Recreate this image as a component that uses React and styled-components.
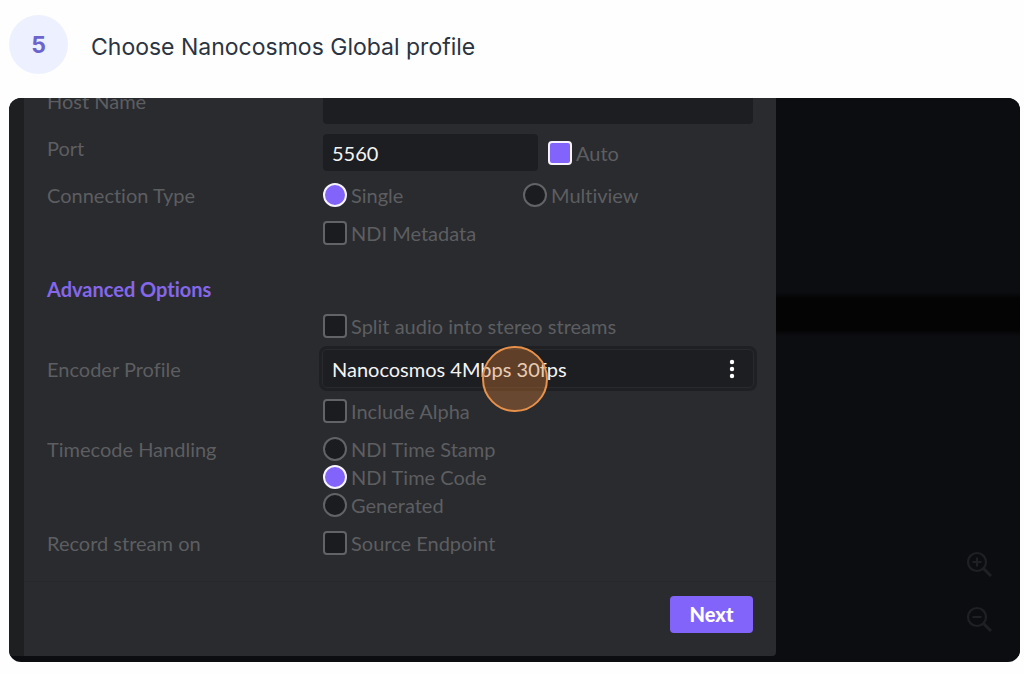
import styled, { createGlobalStyle } from "styled-components";

const GlobalStyle = createGlobalStyle`
  :root {
    --purple: #8364fb;
    --panel: #2a2b2e;
    --field: #1d1e21;
    --stage: #0c0d11;
    --muted: #5d5e61;
  }
  * {
    box-sizing: border-box;
  }
  body {
    margin: 0;
    background-color: #fefefe;
    font-family: Lato, "Liberation Sans", sans-serif;
    font-variant-ligatures: none;
  }
`;

const Page = styled.main`
  padding: 15px 4px 12px 9px;
`;

const StepHeader = styled.header`
  display: flex;
  align-items: center;
  gap: 23px;
  margin-bottom: 24px;
`;

const StepNumber = styled.span`
  display: flex;
  justify-content: center;
  align-items: center;
  width: 59px;
  height: 59px;
  flex: none;
  border-radius: 50%;
  background-color: #edf0fe;
  color: #6c63cf;
  font-family: Inter, sans-serif;
  font-size: 23px;
  font-weight: 700;
`;

const StepTitle = styled.h1`
  margin: 4px 0 0;
  color: #2b3442;
  font-family: Inter, sans-serif;
  font-size: 23px;
  font-weight: 400;
  line-height: 32px;
`;

const Screen = styled.section`
  display: grid;
  grid-template-columns: 15px minmax(0, 752fr) minmax(0, 244fr);
  padding-bottom: 6px;
  overflow: hidden;
  border-radius: 12px;
  background-color: var(--stage);
`;

const Edge = styled.div`
  background-color: #1e1f21;
`;

const Panel = styled.form`
  overflow: hidden;
  border-radius: 0 0 4px 0;
  background-color: var(--panel);
`;

const Fields = styled.div`
  display: flex;
  flex-direction: column;
  gap: 10px;
  margin-top: -11px;
  padding: 0 23px 24px;
  border-bottom: 1px solid #27282b;
`;

const Row = styled.div`
  display: grid;
  grid-template-columns: 276fr 430fr;
  align-items: ${(props) => (props.$center ? "center" : "start")};
`;

const labelText = `
  color: var(--muted);
  font-size: 20px;
  line-height: 28px;
`;

const Label = styled.label`
  ${labelText}
`;

const Name = styled.span`
  ${labelText}
`;

const Stack = styled.div`
  grid-column: 2;
  display: flex;
  flex-direction: column;
  gap: ${(props) => props.$gap || 0}px;
`;

const Pair = styled.div`
  display: grid;
  grid-template-columns: ${(props) => props.$columns};
  align-items: center;
  column-gap: ${(props) => props.$gap || 0}px;
`;

const TextInput = styled.input`
  width: 100%;
  min-width: 0;
  height: 37px;
  padding: 0 9px;
  border: none;
  border-radius: 4px;
  background-color: var(--field);
  color: #f4f4f5;
  font-family: inherit;
  font-size: 20px;
`;

const Option = styled.label`
  display: flex;
  align-items: center;
  gap: 4px;
  ${labelText}
`;

const Tick = styled.input`
  appearance: none;
  flex: none;
  width: 24px;
  height: 24px;
  margin: 0;
  border: 2px solid #626366;
  border-radius: ${(props) => (props.type === "radio" ? "50%" : "4px")};
  background-color: #1b1c1f;

  &:checked {
    border-color: #f6f3ff;
    background-color: var(--purple);
  }
`;

const SectionTitle = styled.h2`
  margin: 19px 0 0;
  color: #8567ec;
  font-size: 20px;
  font-weight: 700;
  line-height: 26px;
`;

const SelectBox = styled.div`
  position: relative;
`;

const ProfileSelect = styled.select`
  appearance: none;
  display: block;
  width: 100%;
  height: 37px;
  padding: 0 44px 0 9px;
  border: none;
  border-radius: 4px;
  outline: 1px solid #292a2d;
  box-shadow: 0 0 0 4px #1f2023;
  background-color: var(--field);
  color: #f4f4f5;
  font-family: inherit;
  font-size: 20px;
`;

const Dots = styled.svg`
  position: absolute;
  top: 8px;
  right: 18px;
  pointer-events: none;
`;

/* click marker drawn over the select */
const ClickMarker = styled.span`
  position: absolute;
  top: -4px;
  left: 37%;
  width: 66px;
  height: 66px;
  border: 2px solid #e8914b;
  border-radius: 50%;
  background-color: rgba(222, 125, 52, 0.35);
  pointer-events: none;
`;

const Footer = styled.footer`
  display: flex;
  justify-content: flex-end;
  padding: 14px 23px 23px;
`;

const NextButton = styled.button`
  width: 83px;
  height: 37px;
  padding: 0 0 2px;
  border: none;
  border-radius: 4px;
  background-color: var(--purple);
  color: white;
  font-family: inherit;
  font-size: 20px;
  font-weight: 900;
`;

const Stage = styled.aside`
  display: flex;
  flex-direction: column;
  justify-content: flex-end;
  align-items: flex-end;
  gap: 15px;
  padding: 0 21px 17px;
  background: linear-gradient(
    var(--stage) 194px,
    #040404 200px,
    #040404 232px,
    var(--stage) 238px
  );
`;

const ZoomButton = styled.button`
  display: flex;
  justify-content: center;
  align-items: center;
  width: 40px;
  height: 40px;
  padding: 0;
  border: none;
  background: none;
  color: #1f2023;
`;

function Choice({ type = "checkbox", name, checked, children }) {
  return (
    <Option>
      <Tick type={type} name={name} defaultChecked={checked} />
      {children}
    </Option>
  );
}

function ZoomIcon({ plus }) {
  return (
    <svg width="26" height="26" viewBox="0 0 26 26" fill="none" stroke="currentColor" strokeWidth="2.2">
      <circle cx="11" cy="11" r="9" />
      <path d="M17.5 17.5L25 25" strokeWidth="3" />
      <path d={plus ? "M6.5 11h9M11 6.5v9" : "M6.5 11h9"} />
    </svg>
  );
}

function App() {
  return (
    <Page>
      <GlobalStyle />
      <StepHeader>
        <StepNumber>5</StepNumber>
        <StepTitle>Choose Nanocosmos Global profile</StepTitle>
      </StepHeader>

      <Screen>
        <Edge />
        <Panel onSubmit={(e) => e.preventDefault()}>
          <Fields>
            <Row>
              <Label htmlFor="host">Host Name</Label>
              <TextInput id="host" type="text" />
            </Row>
            <Row>
              <Label htmlFor="port">Port</Label>
              <Pair $columns="43fr 41fr" $gap={10}>
                <TextInput id="port" type="text" defaultValue="5560" />
                <Choice checked>Auto</Choice>
              </Pair>
            </Row>
            <Row role="group" aria-labelledby="connection">
              <Name id="connection">Connection Type</Name>
              <Stack $gap={10}>
                <Pair $columns="200fr 230fr">
                  <Choice type="radio" name="connection" checked>Single</Choice>
                  <Choice type="radio" name="connection">Multiview</Choice>
                </Pair>
                <Choice>NDI Metadata</Choice>
              </Stack>
            </Row>

            <SectionTitle>Advanced Options</SectionTitle>
            <Row>
              <Stack>
                <Choice>Split audio into stereo streams</Choice>
              </Stack>
            </Row>
            <Row $center>
              <Label htmlFor="profile">Encoder Profile</Label>
              <SelectBox>
                <ProfileSelect id="profile">
                  <option>Nanocosmos 4Mbps 30fps</option>
                </ProfileSelect>
                <Dots width="6" height="22" viewBox="0 0 6 22" fill="white">
                  <circle cx="3" cy="4" r="2.2" />
                  <circle cx="3" cy="11" r="2.2" />
                  <circle cx="3" cy="18" r="2.2" />
                </Dots>
                <ClickMarker />
              </SelectBox>
            </Row>
            <Row>
              <Stack>
                <Choice>Include Alpha</Choice>
              </Stack>
            </Row>
            <Row role="radiogroup" aria-labelledby="timecode">
              <Name id="timecode">Timecode Handling</Name>
              <Stack>
                <Choice type="radio" name="timecode">NDI Time Stamp</Choice>
                <Choice type="radio" name="timecode" checked>NDI Time Code</Choice>
                <Choice type="radio" name="timecode">Generated</Choice>
              </Stack>
            </Row>
            <Row role="group" aria-labelledby="record">
              <Name id="record">Record stream on</Name>
              <Choice>Source Endpoint</Choice>
            </Row>
          </Fields>
          <Footer>
            <NextButton type="submit">Next</NextButton>
          </Footer>
        </Panel>
        <Stage>
          <ZoomButton aria-label="Zoom in">
            <ZoomIcon plus />
          </ZoomButton>
          <ZoomButton aria-label="Zoom out">
            <ZoomIcon />
          </ZoomButton>
        </Stage>
      </Screen>
    </Page>
  );
}

export default App;
